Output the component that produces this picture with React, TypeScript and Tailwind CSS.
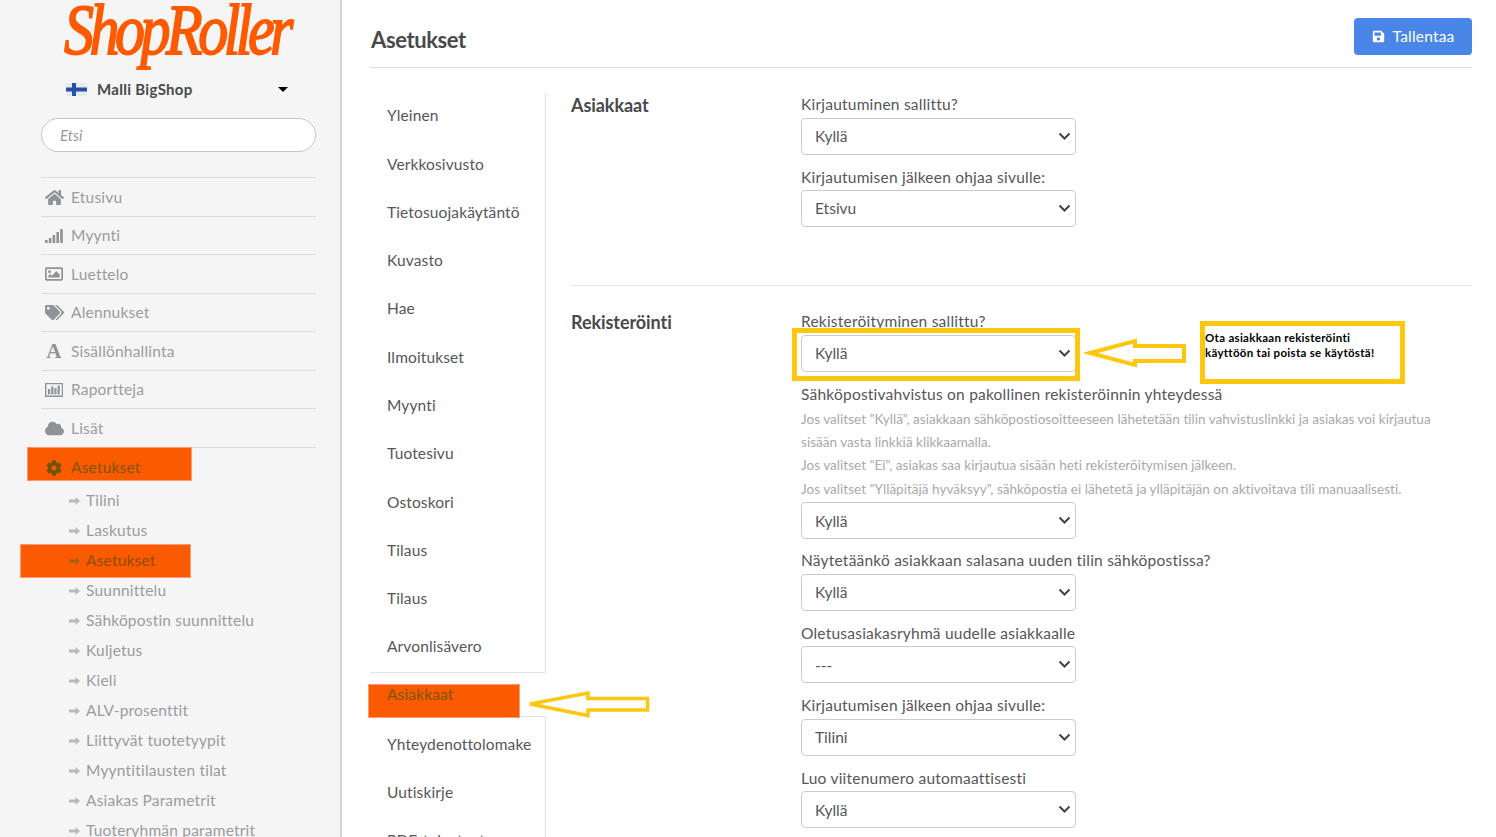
import type { ReactNode } from "react";
import { FaCloud, FaCog, FaHome, FaRegImage, FaSave, FaTags } from "react-icons/fa";

const FONT = "font-['Lato','Liberation_Sans',sans-serif]";

function SignalIcon() {
  return (
    <svg width="18" height="14" viewBox="0 0 18 14" fill="#8f9296">
      <rect x="0" y="11" width="2.6" height="3" />
      <rect x="3.8" y="9" width="2.6" height="5" />
      <rect x="7.6" y="6" width="2.6" height="8" />
      <rect x="11.4" y="3" width="2.6" height="11" />
      <rect x="15.2" y="0" width="2.6" height="14" />
    </svg>
  );
}

function ReportIcon() {
  return (
    <svg width="18" height="14" viewBox="0 0 18 14" fill="#8f9296">
      <path d="M0 0h1.4v12.6H18V14H0z" />
      <path d="M0 0h18v14h-1.2V1.2H0z" />
      <rect x="3" y="6" width="2.2" height="5.4" />
      <rect x="6.2" y="3.4" width="2.2" height="8" />
      <rect x="9.4" y="5" width="2.2" height="6.4" />
      <rect x="12.6" y="2.6" width="2.2" height="8.8" />
    </svg>
  );
}

function SubArrow({ color }: { color: string }) {
  return (
    <svg width="11" height="10" viewBox="0 0 11 10" fill={color}>
      <path d="M0 3.6h6.6V1L11 5 6.6 9V6.4H0z" />
    </svg>
  );
}

const MAIN_MENU: { label: string; icon: ReactNode }[] = [
  { label: "Etusivu", icon: <FaHome size={19} color="#8f9296" /> },
  { label: "Myynti", icon: <SignalIcon /> },
  { label: "Luettelo", icon: <FaRegImage size={18} color="#8f9296" /> },
  { label: "Alennukset", icon: <FaTags size={19} color="#8f9296" /> },
  {
    label: "Sisällönhallinta",
    icon: <span className="font-['Liberation_Serif',serif] text-[21px] font-bold leading-none text-[#8f9296]">A</span>,
  },
  { label: "Raportteja", icon: <ReportIcon /> },
  { label: "Lisät", icon: <FaCloud size={19} color="#8f9296" /> },
];

const SUB_MENU = [
  "Tilini",
  "Laskutus",
  "Asetukset",
  "Suunnittelu",
  "Sähköpostin suunnittelu",
  "Kuljetus",
  "Kieli",
  "ALV-prosenttit",
  "Liittyvät tuotetyypit",
  "Myyntitilausten tilat",
  "Asiakas Parametrit",
  "Tuoteryhmän parametrit",
];

const NAV_BEFORE = [
  "Yleinen",
  "Verkkosivusto",
  "Tietosuojakäytäntö",
  "Kuvasto",
  "Hae",
  "Ilmoitukset",
  "Myynti",
  "Tuotesivu",
  "Ostoskori",
  "Tilaus",
  "Tilaus",
  "Arvonlisävero",
];
const NAV_AFTER = ["Yhteydenottolomake", "Uutiskirje", "PDF-tulosteet"];

function Sidebar() {
  return (
    <aside className="h-full w-[342px] shrink-0 overflow-hidden border-r-2 border-[#d4d4d4] bg-[#f5f5f5] pl-[41px] pr-[24px]">
      <div className="flex h-[62px] items-start justify-center pr-[4px]">
        <span className="mt-[-4px] origin-top scale-y-[1.2] font-['Liberation_Serif',serif] text-[60px] italic leading-[56px] tracking-[-4.5px] text-[#ff5a00] [-webkit-text-stroke:1.5px_#ff5a00]">
          ShopRoller
        </span>
      </div>
      <div className="mt-[14px] flex h-[26px] items-center pl-[25px] pr-[28px]">
        <svg width="21" height="13" viewBox="0 0 21 13">
          <rect width="21" height="13" fill="#e6eaf3" />
          <rect x="6" width="4" height="13" fill="#2450a8" />
          <rect y="4.5" width="21" height="4" fill="#2450a8" />
        </svg>
        <span className="ml-[10px] flex-1 text-[15px] font-bold tracking-[0.3px] text-[#48494b]">Malli BigShop</span>
        <span className="h-0 w-0 border-x-[5px] border-t-[5px] border-x-transparent border-t-black" />
      </div>
      <input
        placeholder="Etsi"
        className="mt-[16px] block h-[34px] w-[275px] rounded-full border border-[#c6c6c6] bg-white pl-[18px] text-[15px] italic outline-none placeholder:text-[#9a9a9a]"
      />
      <nav className="mt-[25px] tracking-[0.2px]">
        {MAIN_MENU.map((item) => (
          <div
            key={item.label}
            className="flex h-[38.5px] items-center border-t border-[#dcdcdc] pt-[1px] text-[15.5px] text-[#9b9c9f]"
          >
            <span className="flex w-[30px] justify-center pl-[2px] pr-[6px]">{item.icon}</span>
            {item.label}
          </div>
        ))}
        <div className="relative flex h-[38px] items-center border-t border-[#dcdcdc] pt-[3px] text-[15.5px] text-[#7b5500]">
          <span className="absolute -left-[14px] -top-px h-[34px] w-[165px] border border-[#ff9a70] bg-[#fa5a00]" />
          <span className="relative flex w-[30px] justify-center pl-[2px] pr-[6px]">
            <FaCog size={16} color="#6f5300" />
          </span>
          <span className="relative">Asetukset</span>
        </div>
        {SUB_MENU.map((label) => {
          const active = label === "Asetukset";
          return (
            <div
              key={label}
              className={`relative flex h-[30px] items-center pl-[28px] pt-[2px] text-[15.5px] ${active ? "text-[#8a4d00]" : "text-[#9b9c9f]"}`}
            >
              {active && <span className="absolute -left-[21px] -top-px h-[34px] w-[171px] border border-[#ff9a70] bg-[#fa5a00]" />}
              <span className="relative w-[17px]">
                <SubArrow color={active ? "#a85f10" : "#b9b9b9"} />
              </span>
              <span className="relative">{label}</span>
            </div>
          );
        })}
      </nav>
    </aside>
  );
}

function SettingsNav() {
  const item = "h-[48.27px] pl-[17px] pt-[11.4px] text-[15.5px] leading-[23px] tracking-[0.13px] text-[#55565a]";
  return (
    <div className="w-[176px] shrink-0">
      <div className="border-r border-[#e2e2e2]">
        {NAV_BEFORE.map((label, i) => (
          <div key={i} className={item}>
            {label}
          </div>
        ))}
      </div>
      <div className="relative h-[45px] border-y border-[#e2e2e2] pl-[17px] pt-[10px] text-[15.5px] leading-[23px] tracking-[0.13px] text-[#7b5500]">
        <span className="absolute -left-[2px] top-[11px] h-[34px] w-[152px] border border-[#ff9a70] bg-[#fa5a00]" />
        <span className="relative">Asiakkaat</span>
      </div>
      <div className="border-r border-[#e2e2e2] pt-[4px]">
        {NAV_AFTER.map((label) => (
          <div key={label} className={item}>
            {label}
          </div>
        ))}
      </div>
    </div>
  );
}

function Field({ label, value, help }: { label: string; value: string; help?: string[] }) {
  return (
    <div className={help ? "mb-[10px]" : "mb-[11px]"}>
      <div className="mb-[1.5px] text-[15.5px] leading-[23px] tracking-[0.22px] text-[#55565a]">{label}</div>
      {help && (
        <div className="mb-[1px] mt-[2px] text-[13.5px] leading-[23.4px] tracking-[0.03px] text-[#a9a9a9]">
          {help.map((line) => (
            <div key={line}>{line}</div>
          ))}
        </div>
      )}
      <div className="relative h-[37px] w-[275px]">
        <select
          defaultValue={value}
          className="h-full w-full appearance-none rounded-[4px] border border-[#cccccc] bg-white pl-[13px] pt-[1px] text-[15.5px] text-[#55565a] outline-none"
        >
          <option>{value}</option>
        </select>
        <svg
          className="pointer-events-none absolute right-[5px] top-[14px]"
          width="13"
          height="9"
          viewBox="0 0 13 9"
          fill="none"
          stroke="#444"
          strokeWidth="2"
        >
          <path d="M1.5 1.5L6.5 6.5L11.5 1.5" />
        </svg>
      </div>
    </div>
  );
}

function Heading({ children }: { children: string }) {
  return <h2 className="w-[230px] shrink-0 text-[18px] font-bold leading-[24px] tracking-[-0.07px] text-[#48494b]">{children}</h2>;
}

function Annotations() {
  return (
    <>
      <div className="absolute left-[792px] top-[328px] h-[53px] w-[288px] border-[5px] border-[#fec70f]" />
      <div className="absolute left-[1200px] top-[321px] h-[63px] w-[205px] border-[5px] border-[#fec70f] pl-0 pt-[4px] text-[11.5px] font-bold leading-[15px] tracking-[0.3px] text-black">
        Ota asiakkaan rekisteröinti
        <br />
        käyttöön tai poista se käytöstä!
      </div>
      <svg className="absolute left-[1084px] top-[336px]" width="104" height="34" viewBox="0 0 104 34" fill="none" stroke="#fec70f" strokeWidth="4">
        <path d="M6 17L51 5V10H100V25H51V29Z" />
      </svg>
      <svg className="absolute left-[524px] top-[689px]" width="126" height="30" viewBox="0 0 126 30" fill="none" stroke="#fec70f" strokeWidth="3.5">
        <path d="M6 15L64 4V9.5H123.5V21H64V26.5Z" />
      </svg>
    </>
  );
}

export default function App() {
  return (
    <div className={`relative flex h-[837px] w-[1496px] overflow-hidden bg-white ${FONT}`}>
      <Sidebar />
      <main className="flex-1 pl-[28px] pr-[24px]">
        <header className="flex h-[68px] items-start justify-between border-b border-[#dedede] pl-[1px]">
          <h1 className="mt-[25px] text-[22px] font-bold leading-[30px] tracking-[-0.4px] text-[#48494b]">Asetukset</h1>
          <button className="mt-[18px] flex h-[37px] w-[118px] items-center justify-center gap-[8px] rounded-[4px] bg-[#4a86e8] text-[15.5px] tracking-[0.2px] text-white">
            <FaSave size={13} />
            Tallentaa
          </button>
        </header>
        <div className="mt-[25px] flex">
          <SettingsNav />
          <div className="flex-1 pl-[25px]">
            <section className="flex h-[193px] border-b border-[#e8e8e8]">
              <Heading>Asiakkaat</Heading>
              <div>
                <Field label="Kirjautuminen sallittu?" value="Kyllä" />
                <Field label="Kirjautumisen jälkeen ohjaa sivulle:" value="Etsivu" />
              </div>
            </section>
            <section className="flex pt-[24px]">
              <Heading>Rekisteröinti</Heading>
              <div>
                <Field label="Rekisteröityminen sallittu?" value="Kyllä" />
                <Field
                  label="Sähköpostivahvistus on pakollinen rekisteröinnin yhteydessä"
                  value="Kyllä"
                  help={[
                    'Jos valitset "Kyllä", asiakkaan sähköpostiosoitteeseen lähetetään tilin vahvistuslinkki ja asiakas voi kirjautua',
                    "sisään vasta linkkiä klikkaamalla.",
                    'Jos valitset "Ei", asiakas saa kirjautua sisään heti rekisteröitymisen jälkeen.',
                    'Jos valitset "Ylläpitäjä hyväksyy", sähköpostia ei lähetetä ja ylläpitäjän on aktivoitava tili manuaalisesti.',
                  ]}
                />
                <Field label="Näytetäänkö asiakkaan salasana uuden tilin sähköpostissa?" value="Kyllä" />
                <Field label="Oletusasiakasryhmä uudelle asiakkaalle" value="---" />
                <Field label="Kirjautumisen jälkeen ohjaa sivulle:" value="Tilini" />
                <Field label="Luo viitenumero automaattisesti" value="Kyllä" />
              </div>
            </section>
          </div>
        </div>
      </main>
      <Annotations />
    </div>
  );
}
